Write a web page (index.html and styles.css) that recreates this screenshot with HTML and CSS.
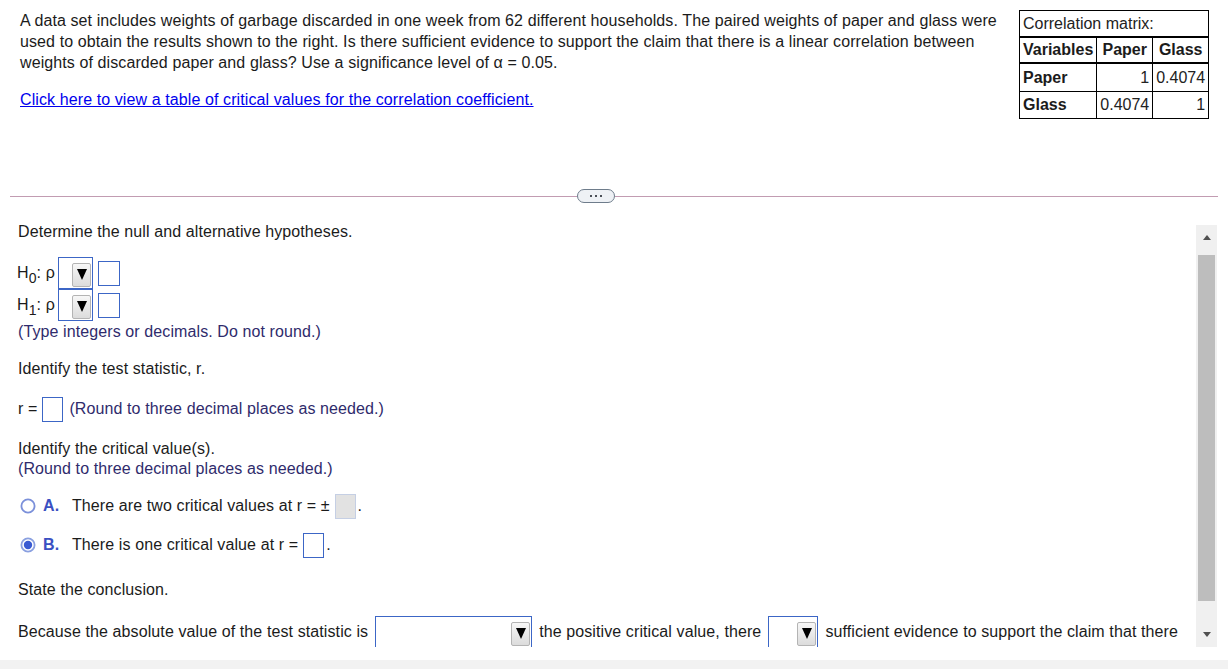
FILE: index.html
```html
<!DOCTYPE html>
<html>
<head>
<meta charset="utf-8">
<link rel="stylesheet" href="styles.css">
</head>
<body>
<div class="top">
  <div class="problem">
    <p class="para">A data set includes weights of garbage discarded in one week from 62 different households. The paired weights of paper and glass were used to obtain the results shown to the right. Is there sufficient evidence to support the claim that there is a linear correlation between weights of discarded paper and glass? Use a significance level of α = 0.05.</p>
    <p class="para"><a class="link" href="#">Click here to view a table of critical values for the correlation coefficient.</a></p>
  </div>
  <table class="corr">
    <tr class="r-cap"><td colspan="3" class="cap">Correlation matrix:</td></tr>
    <tr class="r-head"><td class="hd left">Variables</td><td class="hd">Paper</td><td class="hd">Glass</td></tr>
    <tr class="r-a"><td class="hd left">Paper</td><td class="num">1</td><td class="num">0.4074</td></tr>
    <tr class="r-b"><td class="hd left">Glass</td><td class="num">0.4074</td><td class="num">1</td></tr>
  </table>
</div>

<div class="divider">
  <div class="rule rule-left"></div>
  <div class="more"><span class="dot"></span><span class="dot"></span><span class="dot"></span></div>
  <div class="rule rule-right"></div>
</div>

<div class="main">
  <div class="content">
    <div class="line">Determine the null and alternative hypotheses.</div>

    <div class="hyp">
      <div class="hrow">
        <span class="hlabel">H<sub>0</sub>: ρ</span>
        <span class="sel sel-sm"><span class="btn"><span class="tri"></span></span></span>
        <span class="box"></span>
      </div>
      <div class="hrow">
        <span class="hlabel">H<sub>1</sub>: ρ</span>
        <span class="sel sel-sm"><span class="btn"><span class="tri"></span></span></span>
        <span class="box"></span>
      </div>
    </div>
    <div class="line hint gap1">(Type integers or decimals. Do not round.)</div>

    <div class="line gap17">Identify the test statistic, r.</div>
    <div class="rrow gap18">
      <span>r =</span>
      <span class="box box-r"></span>
      <span class="hint">(Round to three decimal places as needed.)</span>
    </div>

    <div class="line gap18">Identify the critical value(s).</div>
    <div class="line hint">(Round to three decimal places as needed.)</div>

    <div class="opt gap15">
      <svg class="radio" width="16" height="16" viewBox="0 0 16 16"><circle cx="8" cy="8" r="6.6" fill="#fff" stroke="#7b90da" stroke-width="1.8"/></svg>
      <span class="letter">A.</span>
      <span class="otext">There are two critical values at r = ±</span>
      <span class="box box-opt box-dis"></span>
      <span class="period">.</span>
    </div>
    <div class="opt gap15">
      <svg class="radio" width="16" height="16" viewBox="0 0 16 16"><circle cx="8" cy="8" r="6.6" fill="#fff" stroke="#8aa0e0" stroke-width="1.8"/><circle cx="8" cy="8" r="4.2" fill="#3a5bd2"/></svg>
      <span class="letter">B.</span>
      <span class="otext">There is one critical value at r =</span>
      <span class="box box-opt"></span>
      <span class="period">.</span>
    </div>

    <div class="line gap23">State the conclusion.</div>
    <div class="brow gap16">
      <span>Because the absolute value of the test statistic is</span>
      <span class="sel sel-wide"><span class="btn"><span class="tri"></span></span></span>
      <span>the positive critical value, there</span>
      <span class="sel sel-mid"><span class="btn"><span class="tri"></span></span></span>
      <span>sufficient evidence to support the claim that there</span>
    </div>
  </div>
  <div class="scrollbar">
    <div class="sb-up"><span class="tri-up"></span></div>
    <div class="sb-thumb"></div>
    <div class="sb-down"><span class="tri-down"></span></div>
  </div>
</div>

<div class="footer"></div>
</body>
</html>
```

FILE: styles.css
```css
html, body {
  margin: 0;
  padding: 0;
}
body {
  width: 1228px;
  height: 669px;
  overflow: hidden;
  background: #fff;
  font-family: "Liberation Sans", Arial, sans-serif;
  font-size: 16px;
  letter-spacing: 0.1px;
  color: #1b1b1b;
}

/* ---------- top ---------- */
.top {
  display: flex;
  align-items: flex-start;
  box-sizing: border-box;
  height: 186px;
  padding: 10px 0 0 20px;
}
.problem {
  width: 985px;
}
.para {
  margin: 0 0 16px 0;
  line-height: 21px;
}
.link {
  color: #0000ee;
  text-decoration: underline;
}

.corr {
  margin-left: 14px;
  border-collapse: collapse;
  border: 1px solid #000;
  font-size: 16px;
  line-height: 18px;
  letter-spacing: 0;
}
.corr td {
  border: 1px solid #000;
  padding: 0 3px;
  white-space: nowrap;
}
.corr .cap {
  text-align: left;
  color: #222;
}
.r-cap td { height: 25px; border-bottom-width: 2px; }
.r-head td { height: 24px; border-bottom-width: 2px; }
.r-a td { height: 27px; }
.r-b td { height: 26px; }
.corr .hd {
  font-weight: bold;
  text-align: center;
}
.corr .left { text-align: left; }
.corr .num { text-align: right; color: #222; }

/* ---------- divider ---------- */
.divider {
  display: flex;
  align-items: center;
  height: 20px;
  padding: 0 10px;
}
.rule {
  height: 1px;
  background: #c29cb2;
}
.rule-left { width: 567px; }
.rule-right { flex: 1; }
.more {
  box-sizing: border-box;
  width: 38px;
  height: 14px;
  border: 1.5px solid #6e7c8b;
  border-radius: 7px;
  background: #eef1f5;
  display: flex;
  align-items: center;
  justify-content: center;
  gap: 3px;
}
.dot {
  width: 2px;
  height: 2px;
  background: #4a4f57;
}

/* ---------- main scroll area ---------- */
.main {
  display: flex;
  height: 441px;
}
.content {
  flex: 1;
  overflow: hidden;
  box-sizing: border-box;
  padding: 16px 0 0 18px;
}
.line {
  line-height: 20px;
  white-space: nowrap;
}
.hint { color: #2f2b6c; }
.gap1 { margin-top: 1px; }
.gap14 { margin-top: 14px; }
.gap15 { margin-top: 15px; }
.gap16 { margin-top: 16px; }
.gap17 { margin-top: 17px; }
.gap18 { margin-top: 18px; }
.gap23 { margin-top: 23px; }

.hyp { margin-top: 15px; }
.hrow {
  display: flex;
  align-items: center;
  height: 32px;
}
.hlabel {
  line-height: 20px;
  margin-left: -1px;
  width: 41px;
}
.hlabel sub {
  font-size: 14px;
  vertical-align: -5px;
  line-height: 0;
}

.sel {
  position: relative;
  box-sizing: border-box;
  height: 32px;
  border: 1px solid #3c66c6;
  background: #fff;
  display: inline-block;
  flex: none;
}
.sel-sm { width: 35px; }
.sel-wide { width: 157px; }
.sel-mid { width: 50px; }
.btn {
  position: absolute;
  right: 1px;
  bottom: 1px;
  box-sizing: border-box;
  width: 19px;
  height: 24px;
  border: 1px solid #b4b4b4;
  border-radius: 2px;
  background: linear-gradient(#f7f7f7, #dcdcdc);
  display: flex;
  align-items: center;
  justify-content: center;
}
.tri {
  width: 0;
  height: 0;
  border-left: 5px solid transparent;
  border-right: 5px solid transparent;
  border-top: 11px solid #000;
  margin-top: -1px;
}

.box {
  display: inline-block;
  box-sizing: border-box;
  width: 22px;
  height: 25px;
  border: 1.5px solid #3c66c6;
  background: #fff;
  flex: none;
  margin-left: 5px;
}

.rrow {
  display: flex;
  align-items: center;
  height: 24px;
  white-space: nowrap;
}
.box-r {
  width: 21px;
  height: 25px;
  margin: 0 6px 0 5px;
}

.opt {
  display: flex;
  align-items: center;
  height: 24px;
  white-space: nowrap;
}
.radio {
  margin-left: 2px;
  flex: none;
}
.letter {
  margin-left: 7px;
  width: 29px;
  font-weight: bold;
  color: #3a50c2;
}
.box-opt {
  width: 21px;
  height: 25px;
  margin-left: 5px;
}
.box-dis {
  background: #e2e2e2;
  border: 1px solid #c5cfe4;
}
.period { margin-left: 2px; }

.brow {
  display: flex;
  align-items: center;
  gap: 7px;
  height: 32px;
  white-space: nowrap;
}

/* ---------- scrollbar ---------- */
.scrollbar {
  width: 21px;
  margin: 19px 11px 0 0;
  background: #f0f0f0;
  display: flex;
  flex-direction: column;
  align-items: center;
}
.sb-up {
  height: 30px;
  width: 100%;
  display: flex;
  justify-content: center;
  padding-top: 10px;
  box-sizing: border-box;
}
.tri-up {
  width: 0;
  height: 0;
  border-left: 4.5px solid transparent;
  border-right: 4.5px solid transparent;
  border-bottom: 5px solid #505050;
}
.sb-thumb {
  width: 17px;
  height: 346px;
  background: #bdbdbd;
}
.sb-down {
  flex: 1;
  width: 100%;
  display: flex;
  justify-content: center;
  padding-top: 31px;
  box-sizing: border-box;
}
.tri-down {
  width: 0;
  height: 0;
  border-left: 4.5px solid transparent;
  border-right: 4.5px solid transparent;
  border-top: 5px solid #505050;
}

.footer {
  margin-top: 13px;
  height: 9px;
  background: #f2f2f2;
}
```
